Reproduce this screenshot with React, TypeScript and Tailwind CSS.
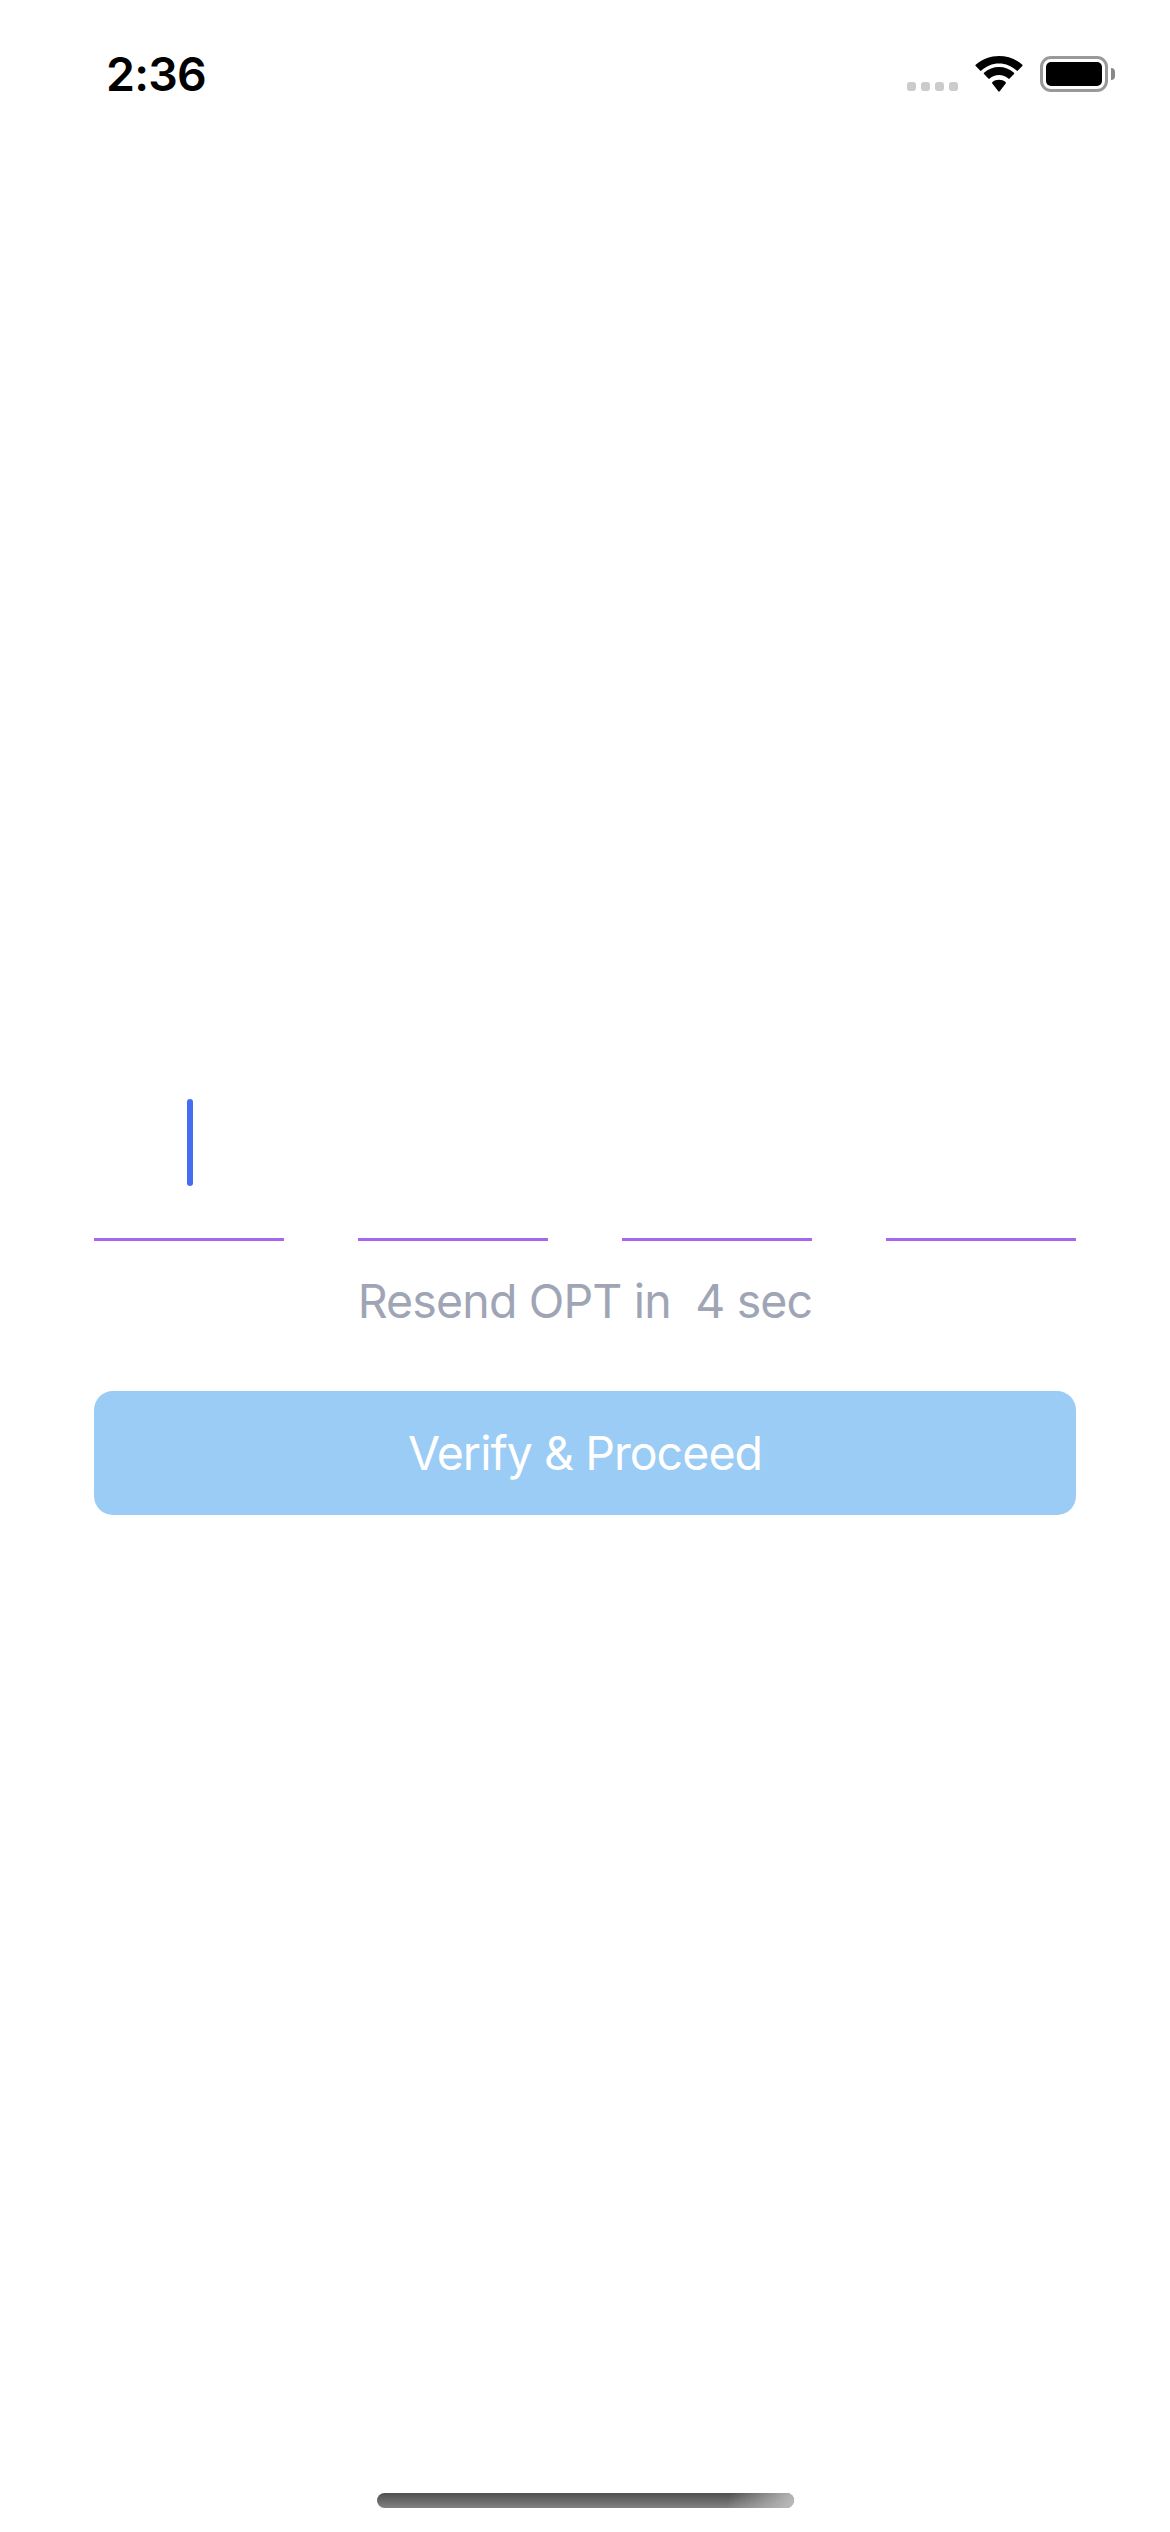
function StatusBar() {
  return (
    <header className="flex h-[148px] items-center justify-between pl-[106px] pr-[55px]">
      <time className="whitespace-nowrap text-[46.5px] font-semibold leading-[60px] tracking-[-0.8px]">2:36</time>
      <div className="flex items-center">
        <div className="mt-[25px] flex gap-[5px]">
          <span className="size-[9px] rounded-[3px] bg-[#cbcbcb]" />
          <span className="size-[9px] rounded-[3px] bg-[#cbcbcb]" />
          <span className="size-[9px] rounded-[3px] bg-[#cbcbcb]" />
          <span className="size-[9px] rounded-[3px] bg-[#cbcbcb]" />
        </div>
        <svg className="ml-4 h-9 w-[50px]" viewBox="0 0 50 36" fill="black">
          <path d="M25 7.4c6.8 0 13 2.7 17.6 7.2.4.4.9.4 1.3 0l4.4-4.5c.4-.4.4-1 0-1.3C35.300 -2.9 14.700 -2.9 1.700 8.800c-.4.4-.4.9 0 1.300l4.400 4.500c.4.4.900.4 1.300 0C12 10.100 18.200 7.400 25 7.400Z" />
          <path d="M25 19c3.500 0 6.800 1.300 9.300 3.600.4.4.9.4 1.300 0l4.400-4.500c.4-.4.4-.9 0-1.300-8.500-7.800-21.500-7.800-30 0-.4.4-.4.900 0 1.300l4.400 4.500c.4.4.900.4 1.300 0C18.200 20.300 21.500 19 25 19Z" />
          <path d="M31.700 27.500c.4-.4.400-1 0-1.300-3.900-3.200-9.500-3.200-13.400 0-.4.300-.4.900 0 1.300l6 7.800c.4.500 1 .500 1.400 0Z" />
        </svg>
        <div className="ml-4 h-9 w-[68px] rounded-[11px] border-3 border-[#999] p-[3px]">
          <div className="h-full rounded-[5px] bg-black" />
        </div>
        <span className="ml-[3px] h-3 w-1 rounded-r-full bg-[#888]" />
      </div>
    </header>
  );
}

function CodeFields() {
  return (
    <div className="grid h-[170px] grid-cols-4 gap-[74px]">
      <div className="flex justify-center border-b-3 border-[#a866ee] pt-[28px]">
        <span className="relative left-px h-[87px] w-1.5 rounded-[3px] bg-[#446df4]" />
      </div>
      <div className="border-b-3 border-[#a866ee]" />
      <div className="border-b-3 border-[#a866ee]" />
      <div className="border-b-3 border-[#a866ee]" />
    </div>
  );
}

export default function App() {
  return (
    <div className="flex h-[2532px] w-[1170px] flex-col bg-white font-['Inter',sans-serif] text-black">
      <StatusBar />
      <main className="mt-[923px] flex flex-col px-[94px]">
        <CodeFields />
        <p className="mt-[30px] whitespace-pre text-center text-[46.5px] leading-[60px] tracking-[-0.85px] text-[#a0a5b6]">{"Resend OPT in  4 sec"}</p>
        <button className="mt-[60px] h-[124px] rounded-[19px] bg-[#9accf5] text-center text-[46.5px] leading-[60px] tracking-[-0.95px] text-white">
          Verify &amp; Proceed
        </button>
      </main>
      <div className="mb-6 ml-[377px] mt-auto h-[15px] w-[417px] overflow-hidden rounded-full bg-linear-to-b from-[#505050] to-[#828282]">
        <div className="ml-auto h-full w-[76px] bg-[linear-gradient(110deg,transparent_15%,#bdbdbd_100%)]" />
      </div>
    </div>
  );
}
